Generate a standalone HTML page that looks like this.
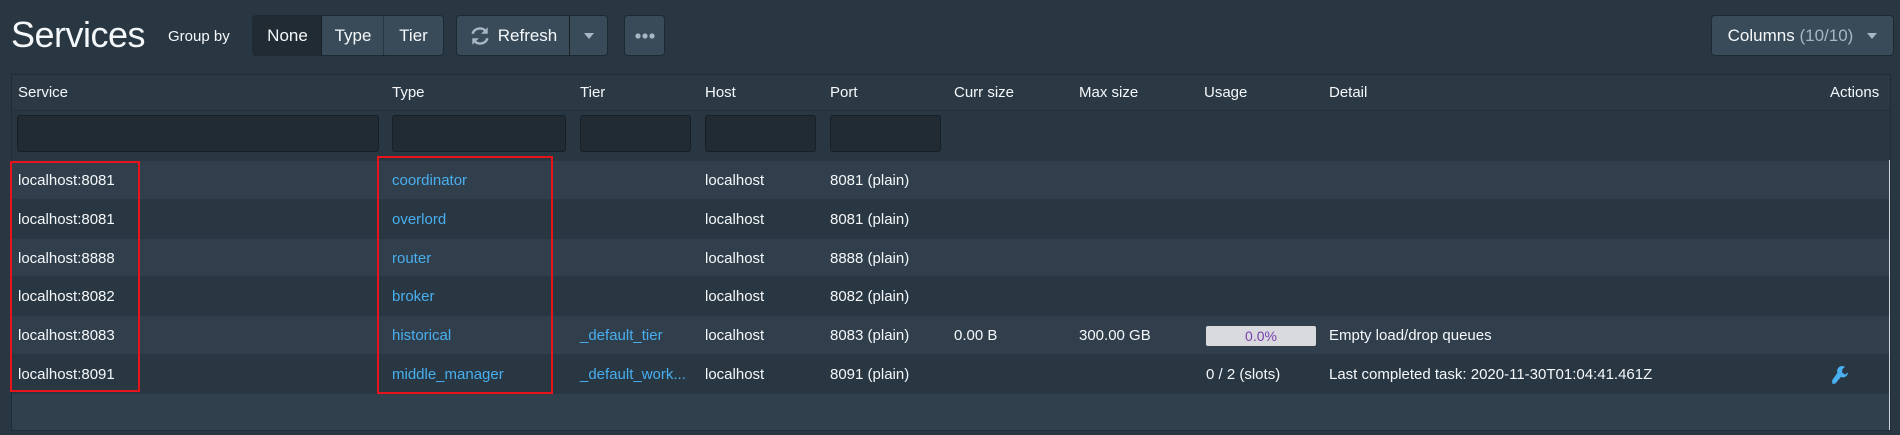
<!DOCTYPE html>
<html><head><meta charset="utf-8"><style>
*{box-sizing:border-box;margin:0;padding:0}
body{width:1900px;height:435px;background:#293742;font-family:"Liberation Sans",sans-serif;color:#f5f8fa;position:relative;overflow:hidden;font-size:15px}
.abs{position:absolute}
.title{left:11px;top:14px;font-size:36px;letter-spacing:-0.5px}
.gb{left:168px;top:28px;font-size:15px}
.btn{position:absolute;top:16px;height:39px;background:#394b59;display:flex;align-items:center;justify-content:center;font-size:17px;box-shadow:0 0 0 1px rgba(16,22,26,.4)}
.tbl{left:12px;top:75px;width:1878px;height:355px;background:#30404d;box-shadow:0 0 0 1px rgba(16,22,26,.3)}
.hd{position:absolute;top:0;height:36px;width:100%;background:#2b3945;border-bottom:1px solid #24313b}
.fl{position:absolute;top:36px;height:49px;width:100%;background:#293742}
.row{position:absolute;left:0;width:100%;height:39px;border-top:1px solid #2a3742}
.c{position:absolute;top:0;line-height:39px;white-space:nowrap}
.h{position:absolute;top:0;line-height:36px;font-size:15px}
.inp{position:absolute;top:40px;height:37px;background:#202b33;border-radius:3px;box-shadow:inset 0 0 0 1px rgba(16,22,26,.5)}
a{color:#48aff0}
.red{position:absolute;border:2px solid #e8141c}
</style></head><body>
<div class="abs title">Services</div>
<div class="abs gb">Group by</div>
<div class="btn" style="left:253px;width:69px;background:#202b33;border-radius:3px 0 0 3px">None</div>
<div class="btn" style="left:322px;width:62px">Type</div>
<div class="btn" style="left:384px;width:59px;border-radius:0 3px 3px 0">Tier</div>
<div class="btn" style="left:457px;width:112px;border-radius:3px 0 0 3px"><svg width="22" height="22" viewBox="0 0 20 20" style="margin-right:7px"><path d="M15.5 6A7 7 0 0 0 3.2 8M4.5 14A7 7 0 0 0 16.8 12" stroke="#a7b6c2" stroke-width="2.2" fill="none"/><path d="M17 2v6h-6z M3 18v-6h6z" fill="#a7b6c2"/></svg>Refresh</div>
<div class="btn" style="left:570px;width:37px;border-radius:0 3px 3px 0"><svg width="10" height="6"><path d="M0 0h10L5 6z" fill="#a7b6c2"/></svg></div>
<div class="btn" style="left:625px;width:39px;border-radius:3px"><svg width="20" height="6"><circle cx="3" cy="3" r="2.6" fill="#a7b6c2"/><circle cx="10" cy="3" r="2.6" fill="#a7b6c2"/><circle cx="17" cy="3" r="2.6" fill="#a7b6c2"/></svg></div>
<div class="btn" style="left:1712px;width:181px;border-radius:3px">Columns&nbsp;<span style="color:#a7b6c2">(10/10)</span><svg width="10" height="6" style="margin-left:14px"><path d="M0 0h10L5 6z" fill="#a7b6c2"/></svg></div>
<div class="abs tbl">
<div class="hd">
<div class="h" style="left:6px">Service</div><div class="h" style="left:380px">Type</div><div class="h" style="left:568px">Tier</div><div class="h" style="left:693px">Host</div><div class="h" style="left:818px">Port</div><div class="h" style="left:942px">Curr size</div><div class="h" style="left:1067px">Max size</div><div class="h" style="left:1192px">Usage</div><div class="h" style="left:1317px">Detail</div><div class="h" style="left:1818px">Actions</div>
</div>
<div class="fl"></div>
<div class="inp" style="left:5px;width:362px"></div><div class="inp" style="left:380px;width:174px"></div><div class="inp" style="left:568px;width:111px"></div><div class="inp" style="left:693px;width:111px"></div><div class="inp" style="left:818px;width:111px"></div>
<div class="row" style="top:85px;background:#313f4c"><div class="c" style="left:6px">localhost:8081</div><div class="c" style="left:380px"><a>coordinator</a></div><div class="c" style="left:693px">localhost</div><div class="c" style="left:818px">8081 (plain)</div></div>
<div class="row" style="top:124px;background:#293742"><div class="c" style="left:6px">localhost:8081</div><div class="c" style="left:380px"><a>overlord</a></div><div class="c" style="left:693px">localhost</div><div class="c" style="left:818px">8081 (plain)</div></div>
<div class="row" style="top:163px;background:#313f4c"><div class="c" style="left:6px">localhost:8888</div><div class="c" style="left:380px"><a>router</a></div><div class="c" style="left:693px">localhost</div><div class="c" style="left:818px">8888 (plain)</div></div>
<div class="row" style="top:201px;background:#293742"><div class="c" style="left:6px">localhost:8082</div><div class="c" style="left:380px"><a>broker</a></div><div class="c" style="left:693px">localhost</div><div class="c" style="left:818px">8082 (plain)</div></div>
<div class="row" style="top:240px;background:#313f4c"><div class="c" style="left:6px">localhost:8083</div><div class="c" style="left:380px"><a>historical</a></div><div class="c" style="left:568px"><a>_default_tier</a></div><div class="c" style="left:693px">localhost</div><div class="c" style="left:818px">8083 (plain)</div><div class="c" style="left:942px">0.00 B</div><div class="c" style="left:1067px">300.00 GB</div><div class="c" style="left:1194px;top:10px;width:110px;height:20px;background:#d8dade;border-radius:2px;line-height:20px;text-align:center;color:#7a3fb0;font-size:14px">0.0%</div><div class="c" style="left:1317px">Empty load/drop queues</div></div>
<div class="row" style="top:279px;background:#293742"><div class="c" style="left:6px">localhost:8091</div><div class="c" style="left:380px"><a>middle_manager</a></div><div class="c" style="left:568px"><a>_default_work...</a></div><div class="c" style="left:693px">localhost</div><div class="c" style="left:818px">8091 (plain)</div><div class="c" style="left:1194px">0 / 2 (slots)</div><div class="c" style="left:1317px">Last completed task: 2020-11-30T01:04:41.461Z</div>
<svg class="c" style="left:1818px;top:10px" width="20" height="20" viewBox="0 0 20 20"><path d="M12 1a5 5 0 0 0-4.6 6.8L2 15.5 2.5 19l3-.5 5.4-6.6A5 5 0 0 0 18 7.5l-3 2-3-2 .5-3.5L15 2a5 5 0 0 0-3-1z" fill="#48aff0"/></svg></div>
<div class="row" style="top:318px;height:37px;background:#30404d"></div>
</div>
<div class="abs" style="left:1889px;top:160px;width:1px;height:270px;background:#cfd6dc"></div>
<div class="red" style="left:10px;top:161px;width:130px;height:231px"></div>
<div class="red" style="left:377px;top:156px;width:176px;height:238px"></div>
</body></html>
